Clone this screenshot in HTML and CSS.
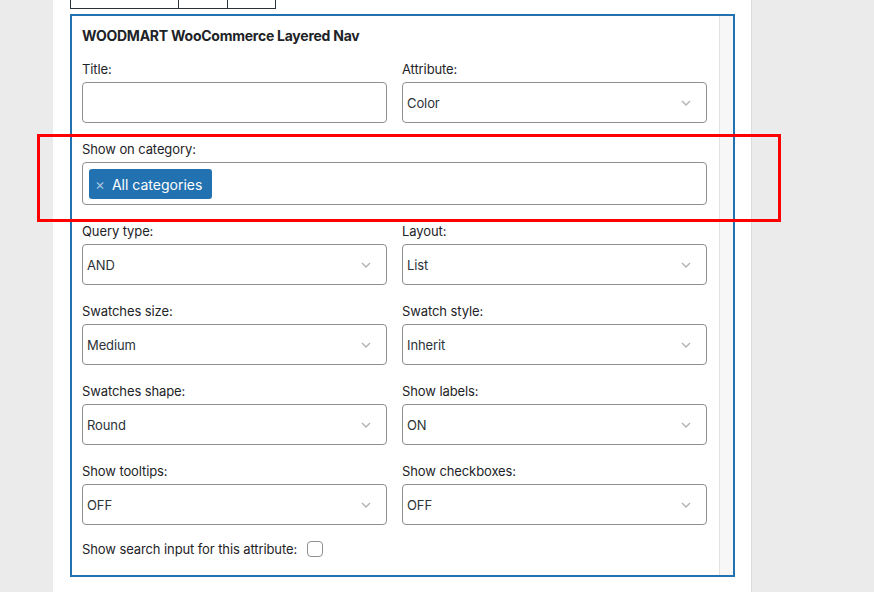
FILE: index.html
```html
<!DOCTYPE html>
<html>
<head>
<meta charset="utf-8">
<link rel="stylesheet" href="styles.css">
</head>
<body>
<div class="panel">
  <div class="toptable">
    <div class="cell c1"></div>
    <div class="cell c2"></div>
    <div class="cell c3"></div>
  </div>
  <div class="widget">
    <div class="content">
      <h3 class="wtitle">WOODMART WooCommerce Layered Nav</h3>
      <div class="grid">
        <div class="field">
          <label class="lbl">Title:</label>
          <div class="box"></div>
        </div>
        <div class="field">
          <label class="lbl">Attribute:</label>
          <div class="box select"><span>Color</span><svg class="chev" viewBox="0 0 10 6" width="10" height="6"><path d="M1 1l4 4 4-4" fill="none" stroke="#b2b2b2" stroke-width="1.4"/></svg></div>
        </div>
        <div class="field wide">
          <label class="lbl">Show on category:</label>
          <div class="box multi"><span class="tag"><span class="x">×</span>All categories</span></div>
        </div>
        <div class="field">
          <label class="lbl">Query type:</label>
          <div class="box select"><span>AND</span><svg class="chev" viewBox="0 0 10 6" width="10" height="6"><path d="M1 1l4 4 4-4" fill="none" stroke="#b2b2b2" stroke-width="1.4"/></svg></div>
        </div>
        <div class="field">
          <label class="lbl">Layout:</label>
          <div class="box select"><span>List</span><svg class="chev" viewBox="0 0 10 6" width="10" height="6"><path d="M1 1l4 4 4-4" fill="none" stroke="#b2b2b2" stroke-width="1.4"/></svg></div>
        </div>
        <div class="field">
          <label class="lbl">Swatches size:</label>
          <div class="box select"><span>Medium</span><svg class="chev" viewBox="0 0 10 6" width="10" height="6"><path d="M1 1l4 4 4-4" fill="none" stroke="#b2b2b2" stroke-width="1.4"/></svg></div>
        </div>
        <div class="field">
          <label class="lbl">Swatch style:</label>
          <div class="box select"><span>Inherit</span><svg class="chev" viewBox="0 0 10 6" width="10" height="6"><path d="M1 1l4 4 4-4" fill="none" stroke="#b2b2b2" stroke-width="1.4"/></svg></div>
        </div>
        <div class="field">
          <label class="lbl">Swatches shape:</label>
          <div class="box select"><span>Round</span><svg class="chev" viewBox="0 0 10 6" width="10" height="6"><path d="M1 1l4 4 4-4" fill="none" stroke="#b2b2b2" stroke-width="1.4"/></svg></div>
        </div>
        <div class="field">
          <label class="lbl">Show labels:</label>
          <div class="box select"><span>ON</span><svg class="chev" viewBox="0 0 10 6" width="10" height="6"><path d="M1 1l4 4 4-4" fill="none" stroke="#b2b2b2" stroke-width="1.4"/></svg></div>
        </div>
        <div class="field">
          <label class="lbl">Show tooltips:</label>
          <div class="box select"><span>OFF</span><svg class="chev" viewBox="0 0 10 6" width="10" height="6"><path d="M1 1l4 4 4-4" fill="none" stroke="#b2b2b2" stroke-width="1.4"/></svg></div>
        </div>
        <div class="field">
          <label class="lbl">Show checkboxes:</label>
          <div class="box select"><span>OFF</span><svg class="chev" viewBox="0 0 10 6" width="10" height="6"><path d="M1 1l4 4 4-4" fill="none" stroke="#b2b2b2" stroke-width="1.4"/></svg></div>
        </div>
      </div>
      <div class="checkrow">
        <span class="lbl">Show search input for this attribute:</span>
        <span class="checkbox"></span>
      </div>
    </div>
    <div class="track"></div>
  </div>
</div>
<div class="highlight"></div>
</body>
</html>
```
FILE: styles.css
```css
html, body {
  margin: 0;
  padding: 0;
}
body {
  background: #ebebeb;
  font-family: "Inter", "Liberation Sans", sans-serif;
  color: #1d2327;
  height: 592px;
  overflow: hidden;
  position: relative;
}
.panel {
  margin-left: 53px;
  width: 681px;
  height: 592px;
  background: #fff;
  border-right: 1px solid #dcdcde;
  padding-left: 17px;
  box-sizing: content-box;
}
.toptable {
  display: flex;
  width: 206px;
  height: 9px;
  border: 1px solid #2c3338;
  border-top: none;
  box-sizing: border-box;
}
.cell {
  height: 100%;
}
.c1 { width: 107px; border-right: 1px solid #2c3338; }
.c2 { width: 48px; border-right: 1px solid #2c3338; }
.c3 { flex: 1; }
.widget {
  margin-top: 5px;
  width: 665px;
  height: 563px;
  border: 2px solid #2271b1;
  box-sizing: border-box;
  display: flex;
}
.content {
  flex: 1;
  padding: 11px 12px 0 10px;
}
.track {
  width: 14px;
  background: #f7f7f7;
  border-left: 1px solid #e2e2e2;
}
.wtitle {
  margin: 0 0 15px;
  font-size: 14px;
  font-weight: 700;
  line-height: 18px;
  letter-spacing: -0.25px;
}
.grid {
  display: grid;
  grid-template-columns: 305px 305px;
  column-gap: 15px;
  row-gap: 17px;
}
.field {
  display: flex;
  flex-direction: column;
  gap: 4px;
}
.wide {
  grid-column: 1 / span 2;
}
.lbl {
  font-size: 13px;
  line-height: 18px;
  color: #1d2327;
  letter-spacing: -0.1px;
}
.box {
  height: 41px;
  border: 1px solid #8c8f94;
  border-radius: 4px;
  box-sizing: border-box;
  background: #fff;
}
.select {
  display: flex;
  align-items: center;
  justify-content: space-between;
  padding: 0 15px 0 4px;
  font-size: 13px;
  color: #2c3338;
  letter-spacing: -0.1px;
}
.multi {
  height: 43px;
  padding: 6px 6px 5px;
  display: flex;
  align-items: flex-start;
}
.tag {
  display: inline-flex;
  align-items: center;
  height: 30px;
  background: #2271b1;
  color: #fff;
  border-radius: 3px;
  padding: 0 10px 0 6px;
  font-size: 14px;
  box-sizing: border-box;
}
.x {
  color: #a7c3dd;
  font-size: 15px;
  margin-right: 7px;
}
.checkrow {
  margin-top: 15px;
  display: flex;
  align-items: center;
  gap: 10px;
}
.checkbox {
  width: 16px;
  height: 16px;
  border: 1px solid #8c8f94;
  border-radius: 4px;
  box-sizing: border-box;
}
.highlight {
  position: absolute;
  left: 37px;
  top: 134px;
  width: 744px;
  height: 88px;
  border: 3px solid #ff0000;
  box-sizing: border-box;
}
```
